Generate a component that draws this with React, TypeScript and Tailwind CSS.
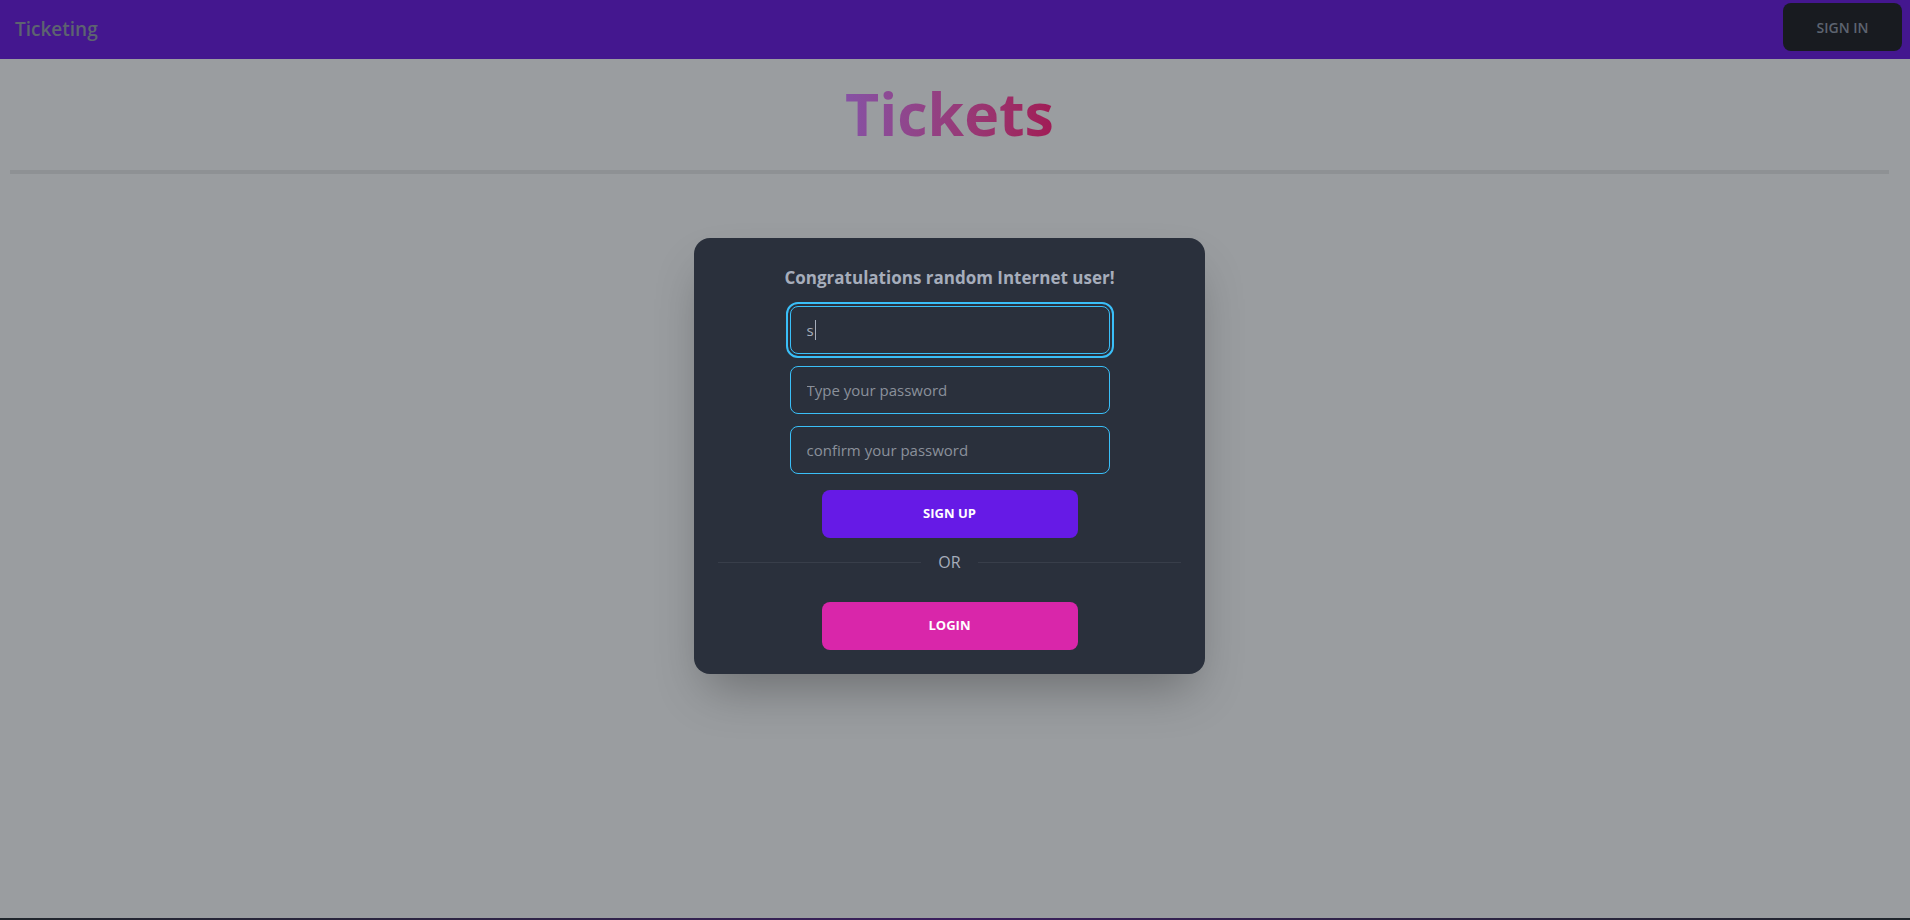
import { useState } from "react";

function NavBar() {
  return (
    <header className="flex h-[59px] shrink-0 items-start justify-between bg-[#44178f] pl-[15px] pr-2">
      <span className="self-center text-[19px] font-semibold text-[#5d6370]">Ticketing</span>
      <button className="mt-[3px] h-12 w-[119px] rounded-lg bg-[#181b20] text-[14px] font-semibold text-[#5d6470]">
        SIGN IN
      </button>
    </header>
  );
}

function Field({ placeholder }: { placeholder: string }) {
  return (
    <input
      className="h-12 w-[320px] rounded-lg border border-[#3abff8] bg-[#2a303c] px-4 text-[15px] text-[#a6adbb] outline-none placeholder:text-[#8a909b]"
      placeholder={placeholder}
      type="password"
    />
  );
}

function SignUpCard() {
  const [mode] = useState("signup");
  return (
    <div className="flex w-[511px] flex-col items-center rounded-2xl bg-[#2a303c] p-6 shadow-[0_25px_50px_-12px_rgba(0,0,0,0.3)]">
      <h2 className="mt-0.5 text-[17px] leading-7 font-bold text-[#a6adbb]">
        Congratulations random Internet user!
      </h2>

      {/* focused email field */}
      <div className="mt-[14px] flex h-12 w-[320px] items-center rounded-lg border border-[#3abff8] px-4 text-[15px] text-[#a6adbb] outline-2 outline-offset-2 outline-[#3abff8] outline-solid">
        <span>s</span>
        <span className="ml-px h-5 w-px bg-[#a6adbb]" />
      </div>
      <div className="mt-3">
        <Field placeholder="Type your password" />
      </div>
      <div className="mt-3">
        <Field placeholder="confirm your password" />
      </div>

      <button className="mt-4 h-12 w-[256px] rounded-lg bg-[#661ae6] text-[13px] font-bold text-white">
        SIGN UP
      </button>

      <div className="mt-3 flex h-6 w-full items-center gap-[17px] text-[16px] text-[#a6adbb]">
        <div className="h-px flex-1 bg-[#383e4a]" />
        <span>OR</span>
        <div className="h-px flex-1 bg-[#383e4a]" />
      </div>

      <button
        className="mt-7 h-12 w-[256px] rounded-lg bg-[#d926aa] text-[13px] font-bold text-white"
        data-mode={mode}
      >
        LOGIN
      </button>
    </div>
  );
}

export default function App() {
  return (
    <div
      className="flex h-screen flex-col bg-[#9a9da0]"
      style={{ fontFamily: '"Open Sans", "Noto Sans", sans-serif' }}
    >
      <NavBar />
      <main className="flex flex-1 flex-col pr-[11px]">
        <h1 className="mt-[14px] self-center bg-gradient-to-r from-[#8651a4] to-[#a11a55] bg-clip-text text-center text-[59px] leading-[80px] font-bold text-transparent">
          Tickets
        </h1>
        <div className="mx-2.5 mt-[17px] h-1 bg-[#8e9194]" />
        <div className="mt-16 flex justify-center">
          <SignUpCard />
        </div>
      </main>
      <div className="h-[2px] bg-gradient-to-r from-[#20262c] via-[#3b1f5e] to-[#20262c]" />
    </div>
  );
}
